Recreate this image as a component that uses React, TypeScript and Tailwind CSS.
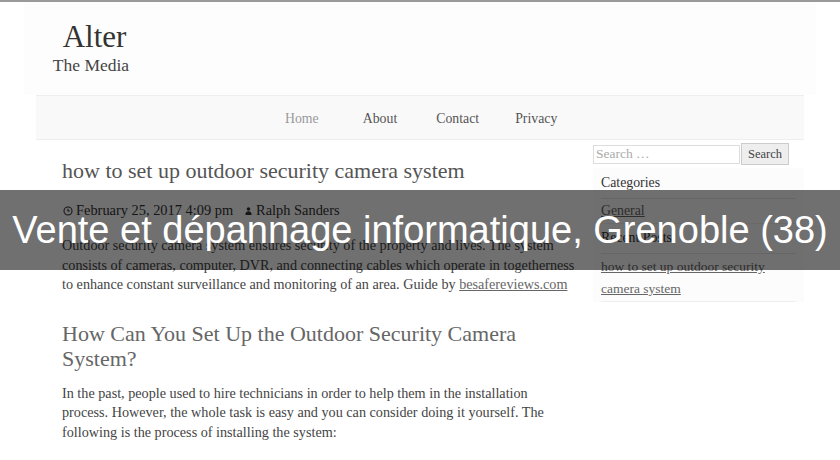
import React from 'react';

const serif = { fontFamily: '"Liberation Serif", "DejaVu Serif", serif' };

function ClockIcon() {
  return (
    <svg width="10" height="10" viewBox="0 0 12 12" className="inline-block mr-[3px] -mt-[2px]">
      <circle cx="6" cy="6" r="4.8" fill="none" stroke="currentColor" strokeWidth="1.3" />
      <path d="M6 3.2V6h2.2" fill="none" stroke="currentColor" strokeWidth="1.3" />
    </svg>
  );
}

function UserIcon() {
  return (
    <svg width="7" height="10" viewBox="0 0 9 11" className="inline-block mr-[4px] -mt-[2px]">
      <circle cx="4.5" cy="3" r="2.3" fill="currentColor" />
      <path d="M0.5 10.5c0-3 1.6-4.6 4-4.6s4 1.6 4 4.6z" fill="currentColor" />
    </svg>
  );
}

export default function App() {
  const navItems = [
    { label: 'Home', cls: 'text-[#999]' },
    { label: 'About', cls: 'ml-[44px] text-[#555]' },
    { label: 'Contact', cls: 'ml-[39px] text-[#555]' },
    { label: 'Privacy', cls: 'ml-[36px] text-[#555]' },
  ];

  return (
    <div className="relative w-[840px] h-[460px] overflow-hidden bg-white border-t-2 border-[#9a9a9a]" style={serif}>
      {/* Header */}
      <header className="mx-[24px] bg-[#fdfdfd] pt-[17px] pb-[20px]">
        <div className="pl-[31px] w-[110px] text-center">
          <div className="text-[31px] leading-[36px] text-[#333]">Alter</div>
          <div className="text-[17.5px] leading-[20px] text-[#444] -ml-[7px]">The Media</div>
        </div>
      </header>

      {/* Navigation */}
      <nav className="mx-[36px] h-[45px] pt-[3px] bg-[#f9f9f9] border-y border-[#eeeeee] flex items-center pl-[249px]">
        {navItems.map((item) => (
          <a key={item.label} href="#" className={`text-[13.8px] ${item.cls}`}>
            {item.label}
          </a>
        ))}
      </nav>

      <div className="mx-[36px] flex">
        {/* Main column */}
        <main className="w-[536px] pl-[26px] pt-[18px]">
          <h1 className="text-[22px] leading-[26px] text-[#555]">how to set up outdoor security camera system</h1>
          <div className="mt-[16px] text-[14.4px] leading-[20px] text-[#333] pl-[1px] whitespace-nowrap">
            <span><ClockIcon />February 25, 2017 4:09 pm</span>
            <span className="ml-[12px]"><UserIcon />Ralph Sanders</span>
          </div>
          <p className="mt-[16px] text-[14.2px] leading-[19.6px] text-[#444] whitespace-nowrap">
            Outdoor security camera system ensures security of the property and lives. The system
            <br />
            consists of cameras, computer, DVR, and connecting cables which operate in togetherness
            <br />
            to enhance constant surveillance and monitoring of an area. Guide by{' '}
            <a href="#" className="underline text-[#666]">besafereviews.com</a>
          </p>
          <h2 className="mt-[26px] text-[22px] leading-[25px] text-[#666] whitespace-nowrap">
            How Can You Set Up the Outdoor Security Camera
            <br />
            System?
          </h2>
          <p className="mt-[13px] text-[14.2px] leading-[19.6px] text-[#444] whitespace-nowrap">
            In the past, people used to hire technicians in order to help them in the installation
            <br />
            process. However, the whole task is easy and you can consider doing it yourself. The
            <br />
            following is the process of installing the system:
          </p>
        </main>

        {/* Sidebar */}
        <aside className="ml-[21px] w-[211px] pt-[3px]">
          <form className="flex items-center">
            <input
              readOnly
              placeholder="Search …"
              className="w-[147px] h-[19px] border border-[#ddd] bg-white px-[2px] text-[13.5px] text-[#aaa] placeholder-[#aaa] outline-none"
              style={serif}
            />
            <button
              type="button"
              className="ml-[1px] w-[48px] h-[22px] border border-[#ccc] bg-[#eeeeee] text-[12.5px] text-[#444]"
              style={serif}
            >
              Search
            </button>
          </form>
          <div className="mt-[3px] bg-[#fcfcfc] px-[8px] text-[13.8px] text-[#333]">
            <div className="h-[31px] flex items-center border-b border-[#e5e5e5]">Categories</div>
            <div className="h-[25px] flex items-center border-b border-[#eee]">
              <a href="#" className="underline text-[#666]">General</a>
            </div>
            <div className="h-[30px] flex items-center border-b border-[#e5e5e5]">Recent Posts</div>
            <div className="pt-[2px] pb-[1px] leading-[22px] border-b border-[#eee] text-[13.5px]">
              <a href="#" className="underline text-[#666]">how to set up outdoor security camera system</a>
            </div>
          </div>
        </aside>
      </div>

      {/* Overlay banner */}
      <div className="absolute left-0 right-0 top-[188px] h-[80px] bg-[rgba(0,0,0,0.56)] flex items-center justify-center">
        <span
          className="text-white text-[38px] leading-none whitespace-nowrap"
          style={{ fontFamily: '"Liberation Sans", Arial, sans-serif' }}
        >
          Vente et dépannage informatique, Grenoble (38)
        </span>
      </div>
    </div>
  );
}
